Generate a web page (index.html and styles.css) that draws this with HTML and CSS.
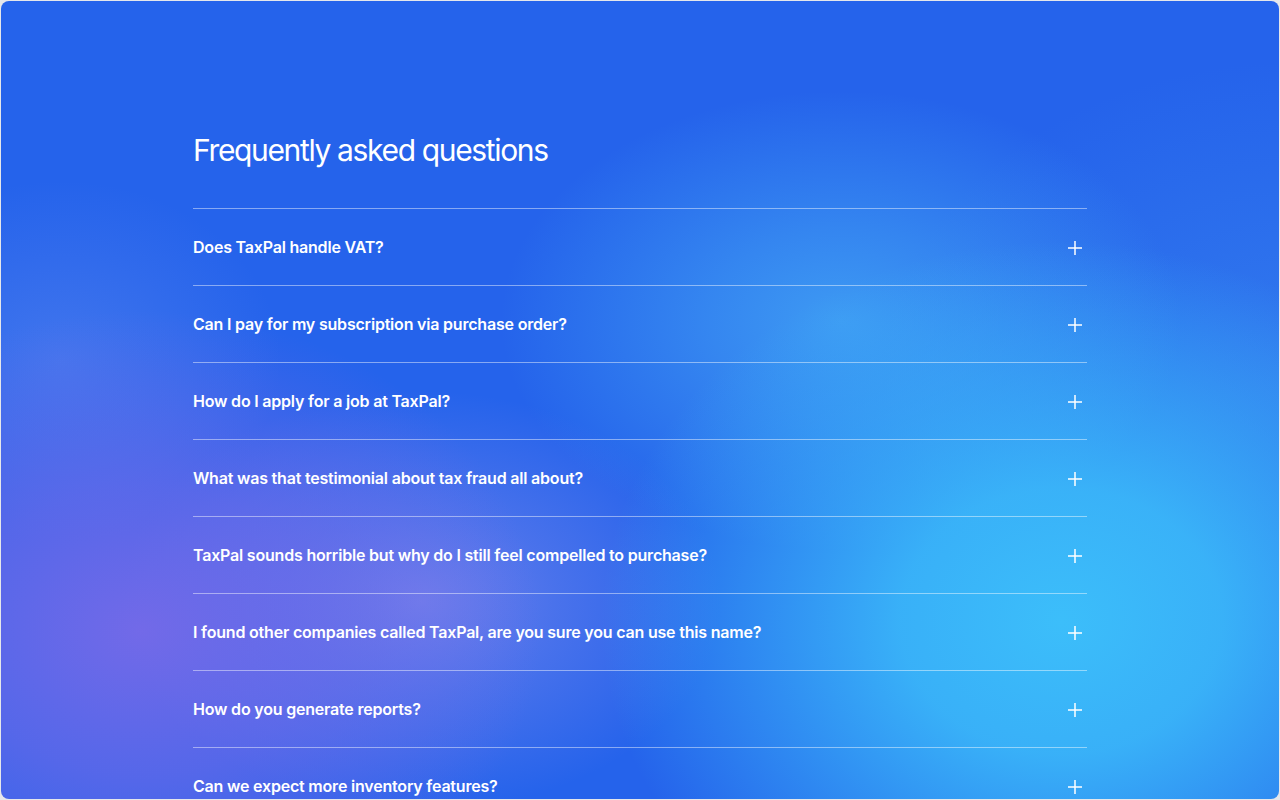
FILE: index.html
```html
<!DOCTYPE html>
<html lang="en">
<head>
<meta charset="utf-8">
<title>FAQ</title>
<link rel="stylesheet" href="styles.css">
</head>
<body>
<div class="frame">
  <section class="card">
    <div class="container">
      <h2 class="title">Frequently asked questions</h2>
      <dl class="faq">
        <div class="item"><dt class="q">Does TaxPal handle VAT?</dt><dd class="icon"><svg viewBox="0 0 24 24" width="24" height="24" fill="none" stroke="currentColor" stroke-width="1.5"><path d="M12 5v14M5 12h14"/></svg></dd></div>
        <div class="item"><dt class="q">Can I pay for my subscription via purchase order?</dt><dd class="icon"><svg viewBox="0 0 24 24" width="24" height="24" fill="none" stroke="currentColor" stroke-width="1.5"><path d="M12 5v14M5 12h14"/></svg></dd></div>
        <div class="item"><dt class="q">How do I apply for a job at TaxPal?</dt><dd class="icon"><svg viewBox="0 0 24 24" width="24" height="24" fill="none" stroke="currentColor" stroke-width="1.5"><path d="M12 5v14M5 12h14"/></svg></dd></div>
        <div class="item"><dt class="q">What was that testimonial about tax fraud all about?</dt><dd class="icon"><svg viewBox="0 0 24 24" width="24" height="24" fill="none" stroke="currentColor" stroke-width="1.5"><path d="M12 5v14M5 12h14"/></svg></dd></div>
        <div class="item"><dt class="q">TaxPal sounds horrible but why do I still feel compelled to purchase?</dt><dd class="icon"><svg viewBox="0 0 24 24" width="24" height="24" fill="none" stroke="currentColor" stroke-width="1.5"><path d="M12 5v14M5 12h14"/></svg></dd></div>
        <div class="item"><dt class="q">I found other companies called TaxPal, are you sure you can use this name?</dt><dd class="icon"><svg viewBox="0 0 24 24" width="24" height="24" fill="none" stroke="currentColor" stroke-width="1.5"><path d="M12 5v14M5 12h14"/></svg></dd></div>
        <div class="item"><dt class="q">How do you generate reports?</dt><dd class="icon"><svg viewBox="0 0 24 24" width="24" height="24" fill="none" stroke="currentColor" stroke-width="1.5"><path d="M12 5v14M5 12h14"/></svg></dd></div>
        <div class="item"><dt class="q">Can we expect more inventory features?</dt><dd class="icon"><svg viewBox="0 0 24 24" width="24" height="24" fill="none" stroke="currentColor" stroke-width="1.5"><path d="M12 5v14M5 12h14"/></svg></dd></div>
      </dl>
    </div>
  </section>
</div>
</body>
</html>
```
FILE: styles.css
```css
html, body {
  margin: 0;
  padding: 0;
  height: 100%;
  overflow: hidden;
  background: #e5e7eb;
}
body {
  font-family: Inter, "Liberation Sans", sans-serif;
  color: #fff;
}
.frame {
  padding: 1px;
  height: 100%;
  box-sizing: border-box;
}
.card {
  height: 100%;
  box-sizing: border-box;
  border-radius: 8px;
  overflow: hidden;
  background-color: #2563eb;
  background-image:
    radial-gradient(ellipse 460px 380px at 1060px 620px, rgba(60, 190, 250, 1) 0%, rgba(60, 190, 250, 0.85) 35%, rgba(60, 190, 250, 0) 100%),
    radial-gradient(ellipse 340px 230px at 840px 320px, rgba(68, 168, 245, 0.8) 0%, rgba(68, 168, 245, 0.5) 40%, rgba(68, 168, 245, 0) 100%),
    radial-gradient(ellipse 400px 320px at 140px 630px, rgba(118, 106, 232, 0.95) 0%, rgba(118, 106, 232, 0.6) 45%, rgba(118, 106, 232, 0) 100%),
    radial-gradient(ellipse 300px 210px at 420px 600px, rgba(128, 136, 236, 0.8) 0%, rgba(128, 136, 236, 0.4) 45%, rgba(128, 136, 236, 0) 100%),
    radial-gradient(ellipse 220px 180px at 60px 360px, rgba(100, 140, 240, 0.45), rgba(100, 140, 240, 0) 100%),
    radial-gradient(ellipse 420px 320px at 1300px 380px, rgba(60, 140, 240, 0.55), rgba(60, 140, 240, 0) 100%);
}
.container {
  width: 894px;
  margin: 0 auto;
  padding-top: 131px;
}
.title {
  margin: 0 0 40px;
  font-size: 30px;
  line-height: 36px;
  font-weight: 400;
  letter-spacing: -0.045em;
}
.faq {
  margin: 0;
  border-top: 1px solid rgba(255, 255, 255, 0.45);
}
.item {
  display: flex;
  align-items: center;
  justify-content: space-between;
  padding: 27px 0 25px;
  border-bottom: 1px solid rgba(255, 255, 255, 0.45);
}
.q {
  font-size: 16px;
  line-height: 23.86px;
  font-weight: 600;
  letter-spacing: -0.2px;
}
.icon {
  margin: 0;
  width: 24px;
  height: 24px;
  display: flex;
}
```
